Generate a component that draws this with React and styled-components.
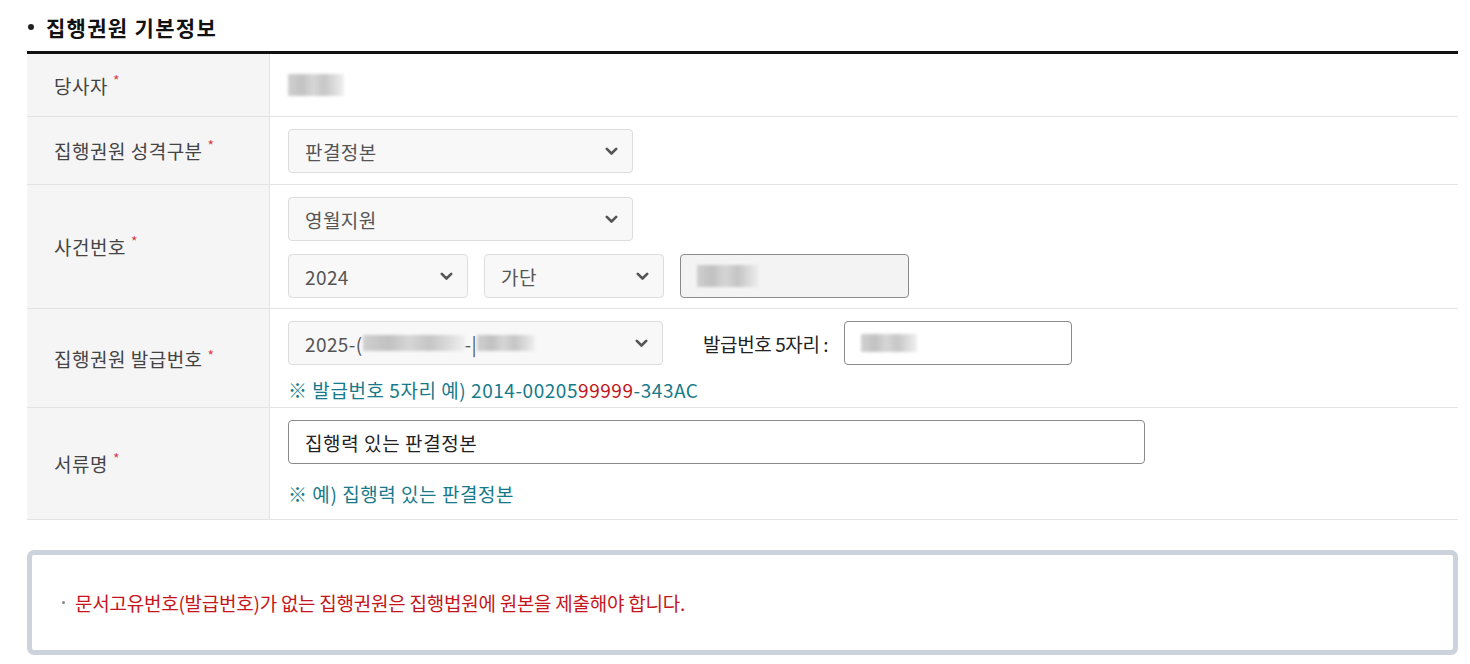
import React from "react";
import styled, { createGlobalStyle } from "styled-components";

const Global = createGlobalStyle`
  html, body { margin: 0; padding: 0; background: #fff; }
  body { font-family: "Noto Sans CJK KR", "Noto Sans", sans-serif; color: #222; }
  * { box-sizing: border-box; }
`;

const Page = styled.div`
  padding: 12px 12px 0 27px;
`;

const Title = styled.h2`
  margin: 0;
  display: flex;
  align-items: center;
  gap: 12px;
  height: 30px;
  font-size: 21px;
  font-weight: 700;
  letter-spacing: 1.3px;
  color: #111;
  padding-bottom: 9px;
  box-sizing: content-box;
  &::before {
    content: "";
    width: 6px;
    height: 6px;
    border-radius: 50%;
    background: #222;
    margin-left: 1px;
  }
`;

const Table = styled.div`
  border-top: 3px solid #111;
`;

const Row = styled.div`
  display: grid;
  grid-template-columns: 243px 1fr;
  border-bottom: 1px solid #e3e3e3;
  min-height: ${(p) => p.$h}px;
`;

const Label = styled.div`
  background: #f5f5f5;
  border-right: 1px solid #e3e3e3;
  display: flex;
  align-items: center;
  padding-left: 27px;
  font-size: 19px;
  color: #444;
  letter-spacing: 0.5px;
`;

const Star = styled.span`
  color: #d9404a;
  font-size: 14px;
  margin-left: 5px;
  align-self: flex-start;
  margin-top: ${(p) => p.$top}px;
`;

const Cell = styled.div`
  padding: ${(p) => p.$pad || "12px 18px 11px"};
  display: flex;
  flex-direction: column;
  justify-content: center;
  gap: ${(p) => p.$gap || 0}px;
`;

const Line = styled.div`
  display: flex;
  align-items: center;
  gap: ${(p) => p.$gap || 16}px;
`;

const SelectBox = styled.div`
  width: ${(p) => p.$w}px;
  height: 44px;
  border: 1px solid #dcdcdc;
  border-radius: 4px;
  background: #f8f8f8;
  display: flex;
  align-items: center;
  justify-content: space-between;
  padding: 0 14px 0 16px;
  font-size: 19px;
  letter-spacing: 0.4px;
  color: #555;
`;

const InputBox = styled.div`
  width: ${(p) => p.$w}px;
  height: 44px;
  border: 1px solid #8a8a8a;
  border-radius: 4px;
  background: ${(p) => (p.$disabled ? "#f3f3f3" : "#fff")};
  display: flex;
  align-items: center;
  padding: 0 16px;
  font-size: 19px;
  letter-spacing: 0.6px;
  color: #222;
`;

const InlineLabel = styled.span`
  font-size: 19px;
  color: #222;
  margin-left: 24px;
  letter-spacing: -0.4px;
`;

const Help = styled.div`
  font-size: 19px;
  letter-spacing: 0.55px;
  color: #167a8a;
  margin-top: ${(p) => p.$mt}px;
  line-height: 26px;
`;

const Red = styled.span`
  color: #c0141b;
`;

const Blur = styled.span`
  display: inline-block;
  width: ${(p) => p.$w}px;
  height: ${(p) => p.$h || 20}px;
  background: linear-gradient(90deg, #c8c8c8 0%, #b8b8b8 25%, #d0d0d0 45%, #bdbdbd 65%, #d8d8d8 85%, #efefef 100%);
  filter: blur(1.6px);
  opacity: 0.85;
  vertical-align: middle;
`;

const Mixed = styled.span`
  display: flex;
  align-items: center;
`;

const Notice = styled.div`
  margin-top: 30px;
  border: 5px solid #ccd3dd;
  border-radius: 7px;
  height: 105px;
  display: flex;
  align-items: center;
  padding: 0 30px;
`;

const NoticeText = styled.p`
  margin: 0;
  display: flex;
  align-items: center;
  gap: 10px;
  font-size: 19px;
  color: #c4161c;
  letter-spacing: -0.25px;
  &::before {
    content: "";
    width: 3px;
    height: 3px;
    border-radius: 50%;
    background: #888;
  }
`;

const Chevron = () => (
  <svg width="13" height="9" viewBox="0 0 13 9" aria-hidden="true">
    <path d="M1.8 1.8 L6.5 6.5 L11.2 1.8" fill="none" stroke="#555" strokeWidth="2.6" strokeLinecap="round" strokeLinejoin="round" />
  </svg>
);

const Select = ({ w, children }) => (
  <SelectBox $w={w}>
    <Mixed>{children}</Mixed>
    <Chevron />
  </SelectBox>
);

export default function App() {
  return (
    <>
      <Global />
      <Page>
        <Title>집행권원 기본정보</Title>
        <Table>
          <Row $h={63}>
            <Label>
              당사자<Star $top={16}>*</Star>
            </Label>
            <Cell $pad="0 18px">
              <Blur $w={56} $h={22} />
            </Cell>
          </Row>
          <Row>
            <Label>
              집행권원 성격구분<Star $top={18}>*</Star>
            </Label>
            <Cell>
              <Select w={345}>판결정본</Select>
            </Cell>
          </Row>
          <Row>
            <Label>
              사건번호<Star $top={46}>*</Star>
            </Label>
            <Cell $gap={13} $pad="12px 18px 10px">
              <Select w={345}>영월지원</Select>
              <Line>
                <Select w={180}>2024</Select>
                <Select w={180}>가단</Select>
                <InputBox $w={229} $disabled>
                  <Blur $w={62} $h={22} />
                </InputBox>
              </Line>
            </Cell>
          </Row>
          <Row>
            <Label>
              집행권원 발급번호<Star $top={36}>*</Star>
            </Label>
            <Cell $pad="12px 18px 4px">
              <Line $gap={16}>
                <Select w={375}>
                  2025-(<Blur $w={102} $h={16} />-|<Blur $w={58} $h={16} />
                </Select>
                <InlineLabel>발급번호 5자리 :</InlineLabel>
                <InputBox $w={228}>
                  <Blur $w={56} $h={18} />
                </InputBox>
              </Line>
              <Help $mt={12}>
                ※ 발급번호 5자리 예) 2014-00205<Red>99999</Red>-343AC
              </Help>
            </Cell>
          </Row>
          <Row>
            <Label>
              서류명<Star $top={40}>*</Star>
            </Label>
            <Cell $pad="12px 18px 12px">
              <InputBox $w={857}>집행력 있는 판결정본</InputBox>
              <Help $mt={17}>※ 예) 집행력 있는 판결정본</Help>
            </Cell>
          </Row>
        </Table>
        <Notice>
          <NoticeText>문서고유번호(발급번호)가 없는 집행권원은 집행법원에 원본을 제출해야 합니다.</NoticeText>
        </Notice>
      </Page>
    </>
  );
}
